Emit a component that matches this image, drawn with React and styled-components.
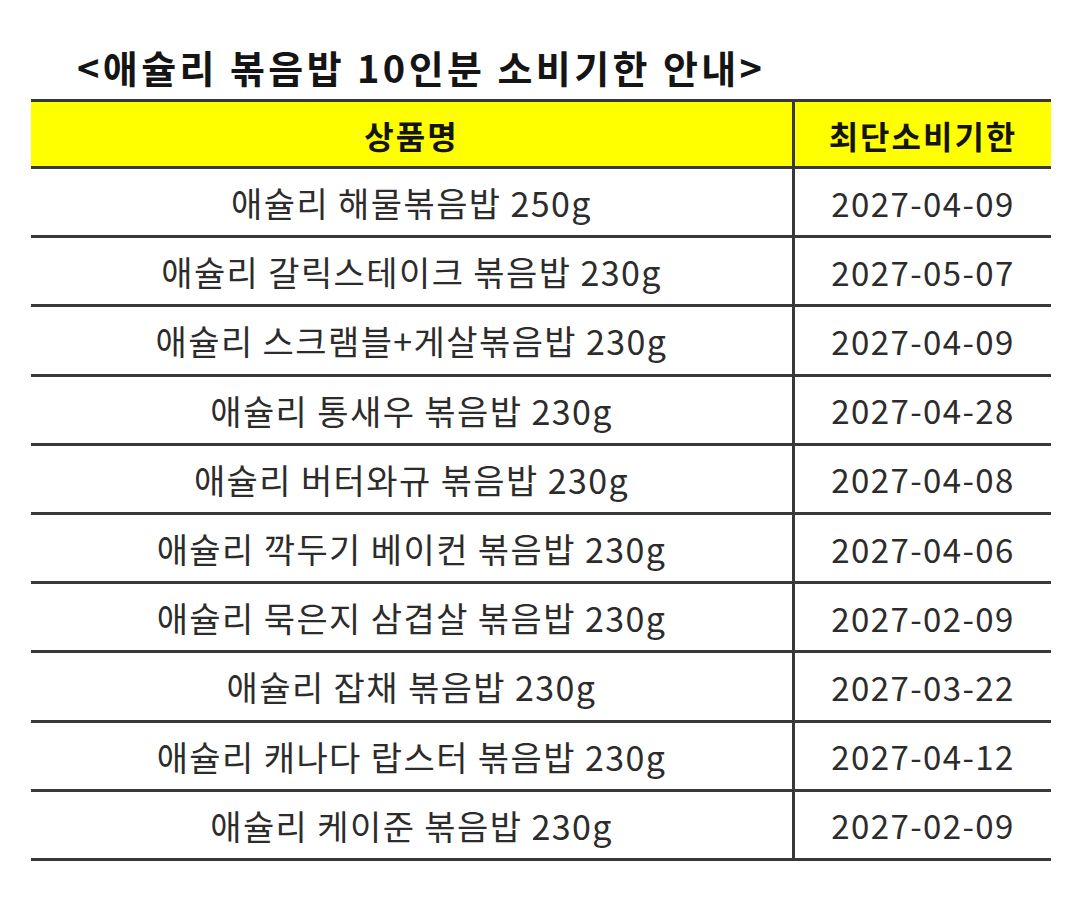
import React from "react";
import styled, { createGlobalStyle } from "styled-components";

const Global = createGlobalStyle`
  html, body { margin: 0; padding: 0; background: #fff; }
  body { font-family: "Noto Sans CJK KR", "Noto Sans", sans-serif; }
`;

const Page = styled.div`
  width: 1080px;
  height: 901px;
  box-sizing: border-box;
  padding: 0 0 0 31px;
  background: #fff;
`;

const Title = styled.h1`
  margin: 0;
  height: 99px;
  box-sizing: border-box;
  padding: 40px 0 0 46px;
  font-size: 38px;
  font-weight: 700;
  line-height: 54px;
  color: #151515;
  letter-spacing: 3.4px;
  white-space: nowrap;
`;

const Table = styled.div`
  display: grid;
  grid-template-columns: 764px 256px;
  width: 1020px;
  border-top: 3px solid #383838;
  border-right: 3px solid #383838;
  box-sizing: border-box;
`;

const Cell = styled.div`
  display: flex;
  align-items: center;
  justify-content: center;
  height: ${(p) => (p.$head ? 63 : 65.2)}px;
  border-bottom: 3px solid #383838;
  border-right: ${(p) => (p.$first ? "3px solid #383838" : "none")};
  background: ${(p) => (p.$head ? "#ffff00" : "#fff")};
  color: ${(p) => (p.$head ? "#141414" : "#2c2c2c")};
  font-size: ${(p) => (p.$head ? 32 : p.$date ? 33 : 34)}px;
  font-weight: ${(p) => (p.$head ? 700 : 400)};
  letter-spacing: ${(p) => (p.$date ? 1.4 : p.$head ? 2 : 1.4)}px;
  white-space: nowrap;
  padding-top: 1px;
  box-sizing: content-box;
`;

const rows = [
  ["애슐리 해물볶음밥 250g", "2027-04-09"],
  ["애슐리 갈릭스테이크 볶음밥 230g", "2027-05-07"],
  ["애슐리 스크램블+게살볶음밥 230g", "2027-04-09"],
  ["애슐리 통새우 볶음밥 230g", "2027-04-28"],
  ["애슐리 버터와규 볶음밥 230g", "2027-04-08"],
  ["애슐리 깍두기 베이컨 볶음밥 230g", "2027-04-06"],
  ["애슐리 묵은지 삼겹살 볶음밥 230g", "2027-02-09"],
  ["애슐리 잡채 볶음밥 230g", "2027-03-22"],
  ["애슐리 캐나다 랍스터 볶음밥 230g", "2027-04-12"],
  ["애슐리 케이준 볶음밥 230g", "2027-02-09"],
];

export default function App() {
  return (
    <Page>
      <Global />
      <Title>&lt;애슐리 볶음밥 10인분 소비기한 안내&gt;</Title>
      <Table>
        <Cell $head $first>상품명</Cell>
        <Cell $head>최단소비기한</Cell>
        {rows.map(([name, date], i) => (
          <React.Fragment key={i}>
            <Cell $first>{name}</Cell>
            <Cell $date>{date}</Cell>
          </React.Fragment>
        ))}
      </Table>
    </Page>
  );
}
